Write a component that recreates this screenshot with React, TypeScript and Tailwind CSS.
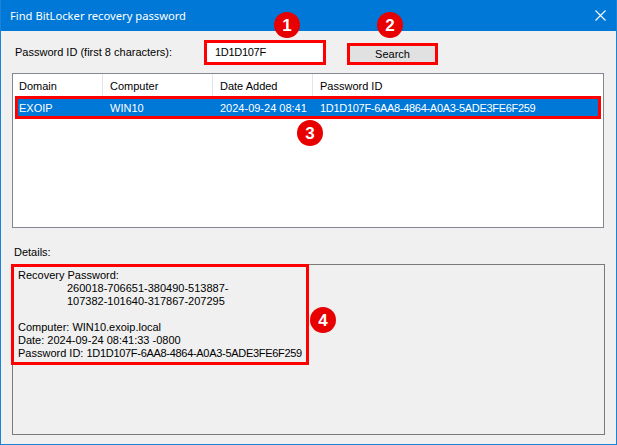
import React from "react";

const Badge = ({ n, x, y }: { n: string; x: number; y: number }) => (
  <div
    className="absolute w-[26px] h-[26px] rounded-full bg-[#e80000] text-white flex items-center justify-center text-[17px] font-bold leading-none"
    style={{ left: x - 13, top: y - 13, fontFamily: '"Liberation Sans", Arial, sans-serif' }}
  >
    {n}
  </div>
);

const Hex = ({ children }: { children: React.ReactNode }) => (
  <span className="tracking-[-0.3px]">{children}</span>
);

export default function App() {
  const cols = [90, 110, 100, 289];
  return (
    <div
      className="relative w-[617px] h-[445px] bg-[#f0f0f0] border-x border-b border-[#1883d7] flex flex-col text-[11px] leading-[13px] text-black overflow-hidden"
      style={{ fontFamily: '"Liberation Sans", Arial, sans-serif' }}
    >
      {/* Title bar */}
      <div className="h-[31px] -mx-px bg-[#0078d7] flex items-center justify-between pl-[10px] pr-[10px] shrink-0">
        <span className="text-white text-[11.2px]" style={{ fontFamily: '"Noto Sans", sans-serif' }}>
          Find BitLocker recovery password
        </span>
        <svg width="11" height="11" viewBox="0 0 11 11" className="mr-[1px]">
          <path d="M0.5 0.5 L10.5 10.5 M10.5 0.5 L0.5 10.5" stroke="white" strokeWidth="1.1" />
        </svg>
      </div>

      {/* Password row */}
      <div className="mt-[9px] h-[25px] flex items-center shrink-0">
        <span className="ml-[14px] w-[189px]">Password ID (first 8 characters):</span>
        <div className="w-[122px] h-[25px] border-[3px] border-[#ff0000] bg-white flex items-center pl-[8px]">
          <Hex>1D1D107F</Hex>
        </div>
        <div className="ml-[21px] w-[91px] h-[22px] mt-[3px] border-[3px] border-[#ff0000] bg-[#e1e1e1] flex items-center justify-center">
          Search
        </div>
      </div>

      {/* List view */}
      <div className="mt-[8px] ml-[11px] w-[592px] h-[155px] border border-[#828790] bg-white shrink-0 flex flex-col">
        <div className="h-[22px] flex">
          {["Domain", "Computer", "Date Added", "Password ID"].map((h, i) => (
            <div
              key={h}
              className={`h-full flex items-center pt-[2px] ${i === 0 ? "pl-[6px]" : "pl-[7px]"} ${i < 3 ? "border-r border-[#e5e5e5]" : ""}`}
              style={{ width: cols[i] }}
            >
              {h}
            </div>
          ))}
        </div>
        <div className="relative h-[23px] flex bg-[#0078d7] text-white mx-[2px]">
          {["EXOIP", "WIN10", "2024-09-24 08:41"].map((c, i) => (
            <div
              key={i}
              className={`h-full flex items-center pt-[1px] ${i === 0 ? "pl-[4px]" : "pl-[7px]"}`}
              style={{ width: i === 0 ? cols[0] - 2 : cols[i] }}
            >
              {c}
            </div>
          ))}
          <div className="h-full flex items-center pt-[1px] pl-[7px] flex-1">
            <Hex>1D1D107F-6AA8-4864-A0A3-5ADE3FE6F259</Hex>
          </div>
          <div className="absolute inset-0 border-[3px] border-[#ff0000] pointer-events-none" />
        </div>
      </div>

      {/* Details */}
      <div className="mt-[18px] ml-[13px] h-[13px] shrink-0">Details:</div>
      <div className="mt-[5px] ml-[11px] w-[593px] h-[171px] border border-[#7a7a7a] pl-[5px] pt-[4px] shrink-0">
        <div>Recovery Password:</div>
        <div className="pl-[49px]">260018-706651-380490-513887-</div>
        <div className="pl-[49px]">107382-101640-317867-207295</div>
        <div className="h-[13px]" />
        <div>Computer: WIN10.exoip.local</div>
        <div>Date: 2024-09-24 08:41:33 -0800</div>
        <div>
          Password ID: <Hex>1D1D107F-6AA8-4864-A0A3-5ADE3FE6F259</Hex>
        </div>
      </div>

      {/* Red highlight around details */}
      <div className="absolute left-[10px] top-[264px] w-[298px] h-[101px] border-[3px] border-[#ff0000] pointer-events-none" />

      <Badge n="1" x={286} y={25} />
      <Badge n="2" x={389} y={25} />
      <Badge n="3" x={309} y={133} />
      <Badge n="4" x={322} y={320} />
    </div>
  );
}
